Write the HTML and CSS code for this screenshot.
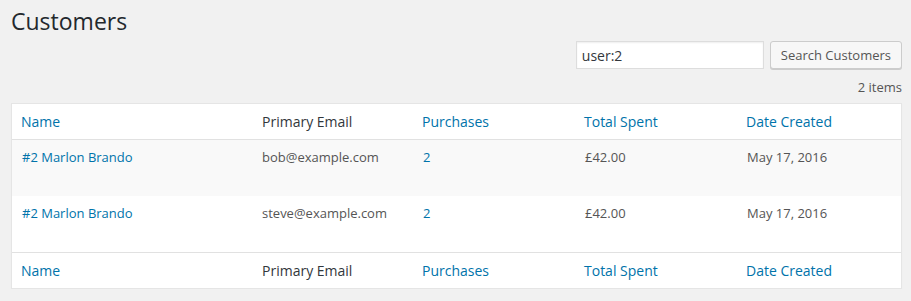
FILE: index.html
```html
<!DOCTYPE html>
<html lang="en">
<head>
<meta charset="utf-8">
<title>Customers</title>
<link rel="stylesheet" href="styles.css">
</head>
<body>
<div class="wrap">
  <h1 class="page-title">Customers</h1>
  <form class="search-box">
    <input class="search-input" type="search" value="user:2">
    <button class="button" type="button">Search Customers</button>
  </form>
  <div class="tablenav">
    <span class="displaying-num">2 items</span>
  </div>
  <table class="list-table">
    <colgroup>
      <col class="c-name"><col class="c-email"><col class="c-num"><col class="c-spent"><col class="c-date">
    </colgroup>
    <thead>
      <tr>
        <th><a href="#">Name</a></th>
        <th>Primary Email</th>
        <th><a href="#">Purchases</a></th>
        <th><a href="#">Total Spent</a></th>
        <th><a href="#">Date Created</a></th>
      </tr>
    </thead>
    <tbody>
      <tr class="alt">
        <td><a href="#">#2 Marlon Brando</a></td>
        <td>bob@example.com</td>
        <td class="shift"><a href="#">2</a></td>
        <td class="shift">£42.00</td>
        <td class="shift">May 17, 2016</td>
      </tr>
      <tr>
        <td><a href="#">#2 Marlon Brando</a></td>
        <td>steve@example.com</td>
        <td class="shift"><a href="#">2</a></td>
        <td class="shift">£42.00</td>
        <td class="shift">May 17, 2016</td>
      </tr>
    </tbody>
    <tfoot>
      <tr>
        <th><a href="#">Name</a></th>
        <th>Primary Email</th>
        <th><a href="#">Purchases</a></th>
        <th><a href="#">Total Spent</a></th>
        <th><a href="#">Date Created</a></th>
      </tr>
    </tfoot>
  </table>
</div>
</body>
</html>
```

FILE: styles.css
```css
html, body {
  margin: 0;
  padding: 0;
  background: #f1f1f1;
  font-family: "Open Sans", "DejaVu Sans", sans-serif;
  font-size: 13px;
  color: #444;
}

.wrap {
  padding: 0 9px 0 11px;
  display: flex;
  flex-direction: column;
}

.page-title {
  margin: 0;
  padding: 7px 0 0 0;
  font-size: 23px;
  font-weight: 400;
  line-height: 29px;
  color: #23282d;
}

.search-box {
  margin: 5px 0 0 0;
  display: flex;
  justify-content: flex-end;
  gap: 6px;
}

.search-input {
  box-sizing: border-box;
  width: 188px;
  height: 28px;
  margin: 0;
  padding: 3px 5px;
  border: 1px solid #ddd;
  background: #fff;
  box-shadow: inset 0 1px 2px rgba(0,0,0,.07);
  font-family: "Open Sans", sans-serif;
  font-size: 14px;
  color: #32373c;
  outline: none;
  -webkit-appearance: none;
  appearance: none;
}

.button {
  box-sizing: border-box;
  height: 28px;
  margin: 0;
  padding: 0 10px 1px;
  border: 1px solid #ccc;
  border-radius: 3px;
  background: #f7f7f7;
  box-shadow: 0 1px 0 #ccc;
  font-family: "Open Sans", sans-serif;
  font-size: 13px;
  line-height: 26px;
  color: #555;
  white-space: nowrap;
}

.tablenav {
  margin-top: 8px;
  display: flex;
  justify-content: flex-end;
  line-height: 20px;
  height: 20px;
}

.displaying-num {
  font-size: 13px;
  color: #555;
}

.list-table {
  margin-top: 6px;
  width: 891px;
  table-layout: fixed;
  border-collapse: separate;
  border-spacing: 0;
  background: #fff;
  border: 1px solid #e5e5e5;
  box-shadow: 0 1px 1px rgba(0,0,0,.04);
}

.c-name { width: 240px; }
.c-email { width: 160px; }
.c-num { width: 162px; }
.c-spent { width: 162px; }
.c-date { width: 165px; }

.list-table th {
  text-align: left;
  font-weight: 400;
  font-size: 14px;
  line-height: 19px;
  padding: 8px 10px;
  color: #32373c;
}

.list-table th:first-child {
  padding-left: 9px;
}

.list-table thead th {
  border-bottom: 1px solid #e1e1e1;
}

.list-table tfoot th {
  border-top: 1px solid #e1e1e1;
}

.list-table td {
  font-size: 13px;
  line-height: 19px;
  padding: 8px 10px 29px;
  color: #555;
  vertical-align: top;
}

.list-table td.shift {
  padding-left: 11px;
}

.list-table tr.alt td {
  background: #f9f9f9;
}

.list-table a {
  color: #0073aa;
  text-decoration: none;
}
```
